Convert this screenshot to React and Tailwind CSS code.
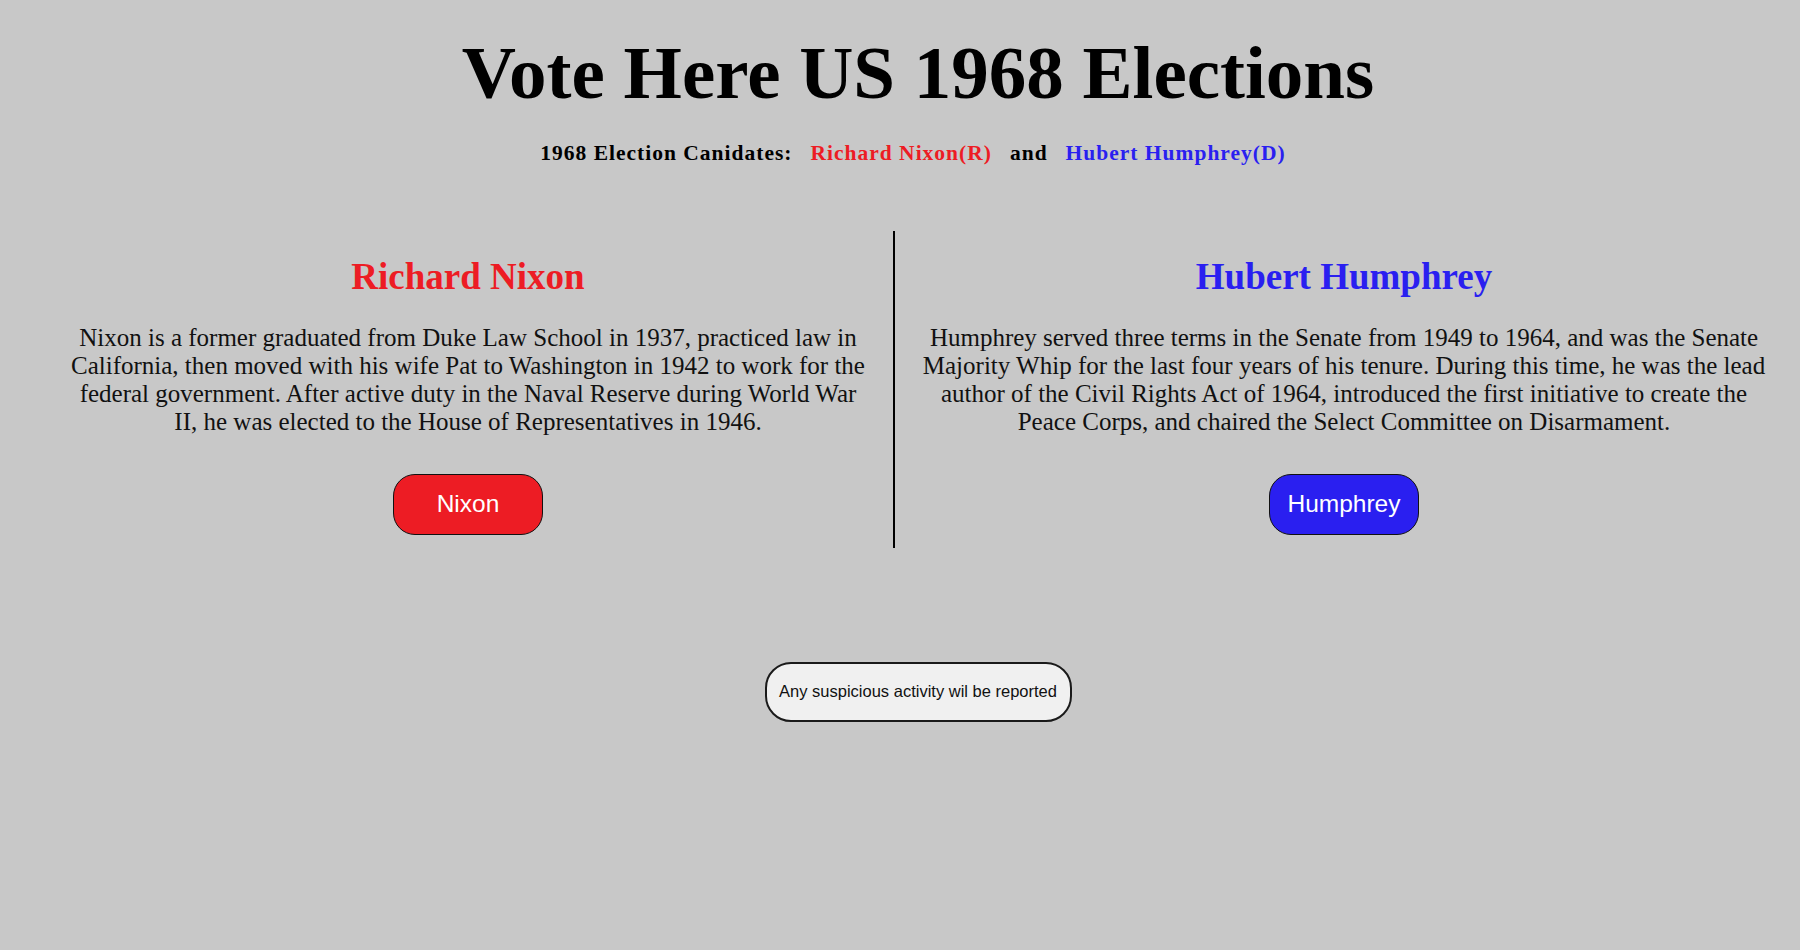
export default function App() {
  return (
    <div className="min-h-screen bg-[#c8c8c8] pl-[36px] font-['Liberation_Serif','Times_New_Roman',serif] text-black">
      <h1 className="pt-[35px] text-center text-[75px] font-bold leading-none">Vote Here US 1968 Elections</h1>

      <div className="mt-[33px] mr-[10px] flex items-baseline justify-center gap-[18px] text-[21.5px] font-bold leading-none tracking-[1px]">
        <span>1968 Election Canidates:</span>
        <span className="text-[#ed1c24]">Richard Nixon(R)</span>
        <span>and</span>
        <span className="text-[#2a1ff0]">Hubert Humphrey(D)</span>
      </div>

      <div className="mt-[66px] flex px-[7px]">
        <div className="flex w-[852px] flex-col items-center border-r-2 border-black pt-[27px] pb-[13px]">
          <h2 className="text-[37px] font-bold leading-none text-[#ed1c24]">Richard Nixon</h2>
          <p className="mt-[29px] w-[800px] text-center text-[25px] leading-[28px] text-[#111]">
            Nixon is a former graduated from Duke Law School in 1937, practiced law in California, then moved with his wife Pat to Washington in 1942 to work for the federal government. After active duty in the Naval Reserve during World War II, he was elected to the House of Representatives in 1946.
          </p>
          <button
            type="button"
            className="mt-[38px] h-[61px] w-[150px] rounded-[22px] border border-[#111] bg-[#ed1c24] font-['Liberation_Sans',Arial,sans-serif] text-[24.5px] text-white"
          >
            Nixon
          </button>
        </div>

        <div className="flex flex-1 flex-col items-center pt-[27px] pb-[13px]">
          <h2 className="text-[37px] font-bold leading-none text-[#2a1ff0]">Hubert Humphrey</h2>
          <p className="mt-[29px] w-[852px] text-center text-[25px] leading-[28px] text-[#111]">
            Humphrey served three terms in the Senate from 1949 to 1964, and was the Senate Majority Whip for the last four years of his tenure. During this time, he was the lead author of the Civil Rights Act of 1964, introduced the first initiative to create the Peace Corps, and chaired the Select Committee on Disarmament.
          </p>
          <button
            type="button"
            className="mt-[38px] h-[61px] w-[150px] rounded-[22px] border border-[#111] bg-[#2a1ff0] font-['Liberation_Sans',Arial,sans-serif] text-[24.5px] text-white"
          >
            Humphrey
          </button>
        </div>
      </div>

      <div className="mx-auto mt-[114px] flex h-[60px] w-[307px] items-center justify-center rounded-[26px] border-2 border-[#1a1a1a] bg-[#f0f0f0] font-['Liberation_Sans',Arial,sans-serif] text-[16.5px] text-[#111]">
        Any suspicious activity wil be reported
      </div>
    </div>
  )
}
